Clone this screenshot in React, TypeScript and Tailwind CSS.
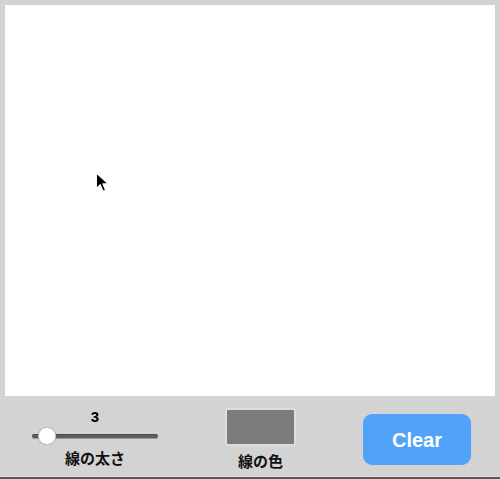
import React from "react";

export default function App() {
  return (
    <div className="w-[500px] h-[479px] flex flex-col bg-[#d3d3d3]" style={{ fontFamily: '"Liberation Sans", "Noto Sans CJK JP", sans-serif' }}>
      <div className="p-[5px] pb-0">
        <div className="relative h-[391px] bg-white">
          <svg className="absolute left-[90px] top-[167px]" width="16" height="22" viewBox="0 0 14 20">
            <path d="M1 1 L1 15 L4.5 11.5 L7 17.5 L9.3 16.5 L6.9 10.8 L11.8 10.8 Z" fill="#000" stroke="#fff" strokeWidth="1" strokeLinejoin="round" />
          </svg>
        </div>
      </div>
      <div className="flex justify-between items-start h-[80px] pl-[32px] pr-[29px]">
        <div className="flex flex-col items-center w-[126px] pt-[13px]">
          <div className="text-[15px] leading-[16px] font-bold text-black">3</div>
          <div className="relative w-[126px] h-[20px] mt-[1px] flex items-center">
            <div className="w-full h-[4px] rounded-full bg-[#5e5e5e] border-t border-[#4a4a4a] shadow-[0_1px_0_#9a9a9a]" />
            <div className="absolute left-[6px] top-[1px] w-[18px] h-[18px] rounded-full bg-white border border-[#cfcfcf] shadow-[0_0_1px_rgba(0,0,0,0.4)]" />
          </div>
          <div className="text-[15px] leading-[20px] font-bold text-[#111] mt-[2px]" style={{ fontFamily: '"Noto Sans CJK JP", sans-serif' }}>線の太さ</div>
        </div>
        <div className="flex flex-col items-center w-[71px] pt-[12px]">
          <div className="w-[71px] h-[38px] rounded-[4px] bg-[#dedede] p-[2px]">
            <div className="w-full h-full bg-[#7b7b7b] rounded-[1px]" />
          </div>
          <div className="text-[15px] leading-[20px] font-bold text-[#111] mt-[5px]" style={{ fontFamily: '"Noto Sans CJK JP", sans-serif' }}>線の色</div>
        </div>
        <div className="pt-[18px]">
          <button className="w-[108px] h-[51px] rounded-[9px] bg-[#50a3f8] text-white text-[20px] font-bold">Clear</button>
        </div>
      </div>
      <div className="h-[1px] bg-[#e0e0e0]" />
      <div className="flex-1 bg-[#5a5a5a]" />
    </div>
  );
}
